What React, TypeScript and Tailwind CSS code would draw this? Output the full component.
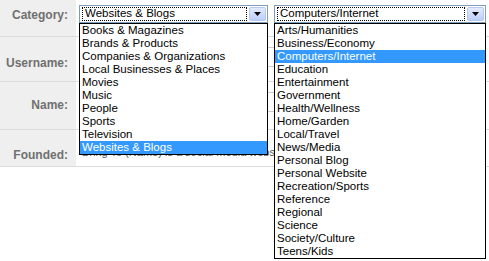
import React from 'react';

const categories = [
  'Books & Magazines',
  'Brands & Products',
  'Companies & Organizations',
  'Local Businesses & Places',
  'Movies',
  'Music',
  'People',
  'Sports',
  'Television',
  'Websites & Blogs',
];

const topics = [
  'Arts/Humanities',
  'Business/Economy',
  'Computers/Internet',
  'Education',
  'Entertainment',
  'Government',
  'Health/Wellness',
  'Home/Garden',
  'Local/Travel',
  'News/Media',
  'Personal Blog',
  'Personal Website',
  'Recreation/Sports',
  'Reference',
  'Regional',
  'Science',
  'Society/Culture',
  'Teens/Kids',
];

// old XP-style combo box, closed state with focus rect
const Select = ({ value, width }: { value: string; width: string }) => (
  <div className={`${width} h-[18px] flex items-center bg-white border border-[#7f9db9] pl-[2px] pr-[1px]`}>
    <div className="flex-1 h-[14px] border border-dotted border-black flex items-center px-[2px] text-[11.5px] text-black leading-none">
      {value}
    </div>
    <div className="ml-[2px] w-[17px] h-[14px] rounded-[2px] border border-[#b5c8f2] bg-gradient-to-b from-[#e3ebfd] to-[#bccff9] flex items-center justify-center">
      <svg width="7" height="4" viewBox="0 0 7 4">
        <path d="M0 0 H7 L3.5 4 Z" fill="#000" />
      </svg>
    </div>
  </div>
);

const DropList = ({ items, selected, className }: { items: string[]; selected: string; className: string }) => (
  <ul className={`absolute bg-white border border-black ${className}`}>
    {items.map((item) => (
      <li
        key={item}
        className={`h-[13px] leading-[13px] px-[2px] text-[11.5px] whitespace-nowrap ${
          item === selected ? 'bg-[#3399ff] text-white' : 'text-black'
        }`}
      >
        {item}
      </li>
    ))}
  </ul>
);

const Row = ({ label, height, labelPad, children }: { label: string; height: string; labelPad: string; children?: React.ReactNode }) => (
  <div className={`flex ${height} border-b border-[#dcdcdc]`}>
    <div className={`w-[76px] shrink-0 bg-[#efefef] text-right pr-[8px] ${labelPad} text-[12px] font-bold text-[#707070]`}>
      {label}
    </div>
    <div className="flex-1 bg-white">{children}</div>
  </div>
);

export default function App() {
  return (
    <div className="relative w-[489px] h-[261px] bg-white overflow-hidden font-['Liberation_Sans',Arial,sans-serif]">
      <div className="flex flex-col">
        <Row label="Category:" height="h-[37px]" labelPad="pt-[6px]">
          <div className="flex gap-[6px] pl-[3px] pt-[5px]">
            <Select value="Websites & Blogs" width="w-[189px]" />
            <Select value="Computers/Internet" width="w-[212px]" />
          </div>
        </Row>
        <Row label="Username:" height="h-[45px]" labelPad="pt-[17px]">
          <div className="pl-[3px] pt-[10px]">
            <div className="w-[200px] h-[20px] border border-[#ccc]" />
          </div>
        </Row>
        <Row label="Name:" height="h-[48px]" labelPad="pt-[14px]">
          <div className="pl-[3px] pt-[10px]">
            <div className="w-[200px] h-[20px] border border-[#ccc]" />
          </div>
        </Row>
        <Row label="Founded:" height="h-[37px]" labelPad="pt-[16px]">
          <div className="pl-[6px] pt-[14px] text-[11px] text-[#555] whitespace-nowrap">
            Bring To (Name) is a social media website
          </div>
        </Row>
      </div>

      <DropList items={categories} selected="Websites & Blogs" className="left-[79px] top-[23px] w-[189px]" />
      <DropList items={topics} selected="Computers/Internet" className="left-[274px] top-[23px] w-[212px]" />
    </div>
  );
}
